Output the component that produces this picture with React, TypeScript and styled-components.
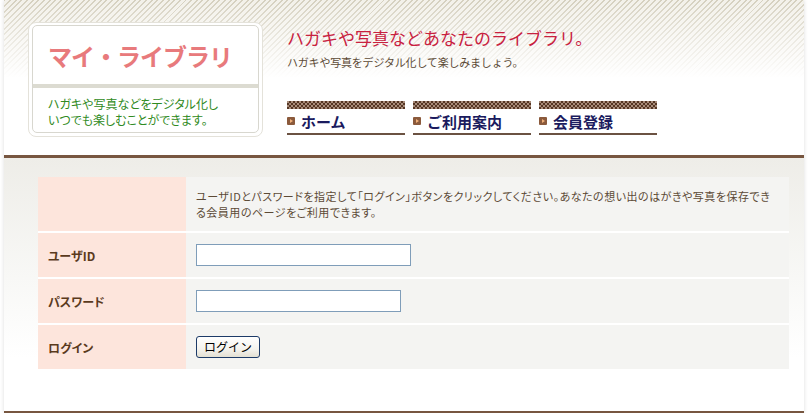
import React from "react";
import styled, { createGlobalStyle } from "styled-components";

const GlobalStyle = createGlobalStyle`
  html, body {
    margin: 0;
    padding: 0;
    background: #fff;
    overflow: hidden;
  }
  body {
    font-family: "Noto Sans CJK JP", "Noto Sans", sans-serif;
  }
`;

const Page = styled.div`
  width: 800px;
  height: 413px;
  margin-left: 4px;
  background: #fff;
  box-shadow: 0 0 4px rgba(0, 0, 0, 0.14);
  display: flex;
  flex-direction: column;
`;

const Header = styled.header`
  height: 158px;
  box-sizing: border-box;
  display: flex;
  align-items: flex-start;
  padding: 22px 0 0 24px;
  border-bottom: 3px solid #775640;
  background:
    linear-gradient(
      to bottom,
      rgba(255, 255, 255, 0) 0,
      rgba(255, 255, 255, 0.55) 40px,
      #fff 78px
    ),
    repeating-linear-gradient(135deg, #d5d0bf 0 1.4px, #f3f1ea 1.4px 4px);
`;

const LogoFrame = styled.div`
  width: 235px;
  height: 115px;
  box-sizing: border-box;
  padding: 2px 3px 3px;
  background: #fff;
  border: 1px solid #e4e2da;
  border-radius: 8px;
`;

const LogoBox = styled.div`
  height: 100%;
  box-sizing: border-box;
  border: 1px solid #d8d7cf;
  border-radius: 5px;
  display: flex;
  flex-direction: column;
  overflow: hidden;
`;

const LogoTitle = styled.div`
  height: 58px;
  display: flex;
  align-items: center;
  padding-left: 15px;
  font-size: 24px;
  font-weight: 700;
  letter-spacing: -1px;
  color: #e87a7c;
`;

const LogoBand = styled.div`
  height: 4px;
  background: #dcdbd1;
`;

const LogoText = styled.div`
  padding: 8px 0 0 15px;
  font-size: 12px;
  line-height: 16px;
  color: #2f8a22;
  font-feature-settings: "palt";
`;

const Lead = styled.div`
  margin-left: 24px;
  display: flex;
  flex-direction: column;
`;

const Catch = styled.h1`
  margin: 5px 0 0;
  font-size: 17px;
  line-height: 22px;
  font-weight: 400;
  color: #c8213f;
`;

const SubCatch = styled.p`
  margin: 6px 0 0;
  font-size: 11px;
  line-height: 14px;
  letter-spacing: -0.2px;
  color: #5c4a36;
`;

const Nav = styled.nav`
  display: flex;
  gap: 8px;
  margin-top: 32px;
`;

const NavItem = styled.a`
  width: 118px;
  display: flex;
  flex-direction: column;
  text-decoration: none;
`;

const Checker = styled.div`
  height: 8px;
  background: repeating-conic-gradient(#553624 0 25%, #a88c7a 0 50%) 0 0 / 4px 4px;
`;

const NavLabel = styled.div`
  height: 24px;
  display: flex;
  align-items: center;
  gap: 6px;
  border-bottom: 2px solid #6b5242;
  font-size: 15px;
  font-weight: 700;
  color: #1b1b5e;
`;

const Bullet = styled.span`
  width: 8px;
  height: 8px;
  border-radius: 1px;
  background: #8b5a3c;
  display: inline-flex;
  align-items: center;
  justify-content: center;

  &::after {
    content: "";
    border-left: 3px solid #f0b07a;
    border-top: 2px solid transparent;
    border-bottom: 2px solid transparent;
    margin-left: 1px;
  }
`;

const Main = styled.main`
  flex: 1;
  box-sizing: border-box;
  padding: 19px 15px 0 34px;
  border-bottom: 2px solid #775640;
  background: linear-gradient(to bottom, #eeede8 0, #f8f8f6 120px, #fff 200px);
`;

const FormGrid = styled.div`
  display: grid;
  grid-template-columns: 148px 1fr;
  grid-template-rows: 54px 44px 44px 44px;
  row-gap: 2px;
  background: #fff;
`;

const LabelCell = styled.div`
  background: #fde5dc;
  display: flex;
  align-items: center;
  padding-left: 10px;
  font-size: 12px;
  font-weight: 700;
  color: #5a3a1c;
  font-feature-settings: "palt";
`;

const ValueCell = styled.div`
  background: #f4f4f2;
  display: flex;
  align-items: center;
  padding-left: 10px;
`;

const Note = styled.p`
  margin: 0;
  font-size: 11px;
  line-height: 16px;
  letter-spacing: 0.5px;
  color: #5c4a36;
  font-feature-settings: "palt";
  white-space: nowrap;
`;

const TextInput = styled.input<{ $width: number }>`
  width: ${(p) => p.$width}px;
  height: 22px;
  box-sizing: border-box;
  border: 1px solid #7f9db9;
  background: #fff;
  padding: 0 3px;
  outline: none;
`;

const Button = styled.button`
  width: 64px;
  height: 22px;
  box-sizing: border-box;
  border: 1px solid #1d3b68;
  border-radius: 3px;
  background: linear-gradient(to bottom, #fff 0, #f4f3ee 60%, #e3e0d3 100%);
  font-family: "Noto Sans CJK JP", sans-serif;
  font-size: 12px;
  line-height: 18px;
  color: #000;
  padding: 0;
`;

const navItems = ["ホーム", "ご利用案内", "会員登録"];

export default function App() {
  return (
    <>
      <GlobalStyle />
      <Page>
        <Header>
          <LogoFrame>
            <LogoBox>
              <LogoTitle>マイ・ライブラリ</LogoTitle>
              <LogoBand />
              <LogoText>
                ハガキや写真などをデジタル化し
                <br />
                いつでも楽しむことができます。
              </LogoText>
            </LogoBox>
          </LogoFrame>
          <Lead>
            <Catch>ハガキや写真などあなたのライブラリ。</Catch>
            <SubCatch>ハガキや写真をデジタル化して楽しみましょう。</SubCatch>
            <Nav>
              {navItems.map((label) => (
                <NavItem key={label} href="#">
                  <Checker />
                  <NavLabel>
                    <Bullet />
                    {label}
                  </NavLabel>
                </NavItem>
              ))}
            </Nav>
          </Lead>
        </Header>
        <Main>
          <FormGrid>
            <LabelCell />
            <ValueCell>
              <Note>
                ユーザIDとパスワードを指定して「ログイン」ボタンをクリックしてください。あなたの想い出のはがきや写真を保存でき
                <br />
                る会員用のページをご利用できます。
              </Note>
            </ValueCell>
            <LabelCell>ユーザID</LabelCell>
            <ValueCell>
              <TextInput $width={215} type="text" />
            </ValueCell>
            <LabelCell>パスワード</LabelCell>
            <ValueCell>
              <TextInput $width={205} type="password" />
            </ValueCell>
            <LabelCell>ログイン</LabelCell>
            <ValueCell>
              <Button type="button">ログイン</Button>
            </ValueCell>
          </FormGrid>
        </Main>
      </Page>
    </>
  );
}
